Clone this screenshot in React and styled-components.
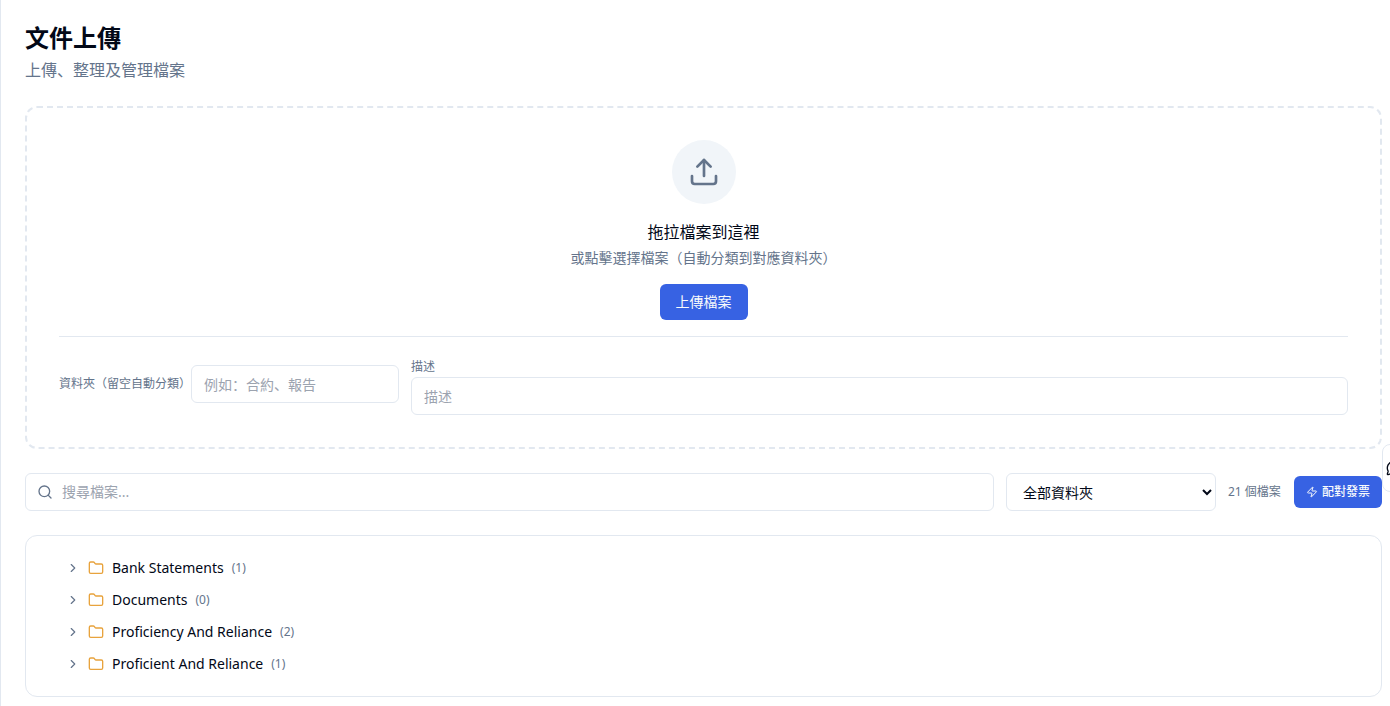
import React, { useState } from "react";
import styled, { createGlobalStyle } from "styled-components";
import {
  ChevronRight,
  Folder,
  MessageCircle,
  Search,
  Upload,
  Zap,
} from "lucide-react";

const folders = [
  { name: "Bank Statements", count: 1 },
  { name: "Documents", count: 0 },
  { name: "Proficiency And Reliance", count: 2 },
  { name: "Proficient And Reliance", count: 1 },
];

const App = () => {
  const [query, setQuery] = useState("");

  return (
    <>
      <GlobalStyle />
      <Page>
        <header>
          <Title>文件上傳</Title>
          <Subtitle>上傳、整理及管理檔案</Subtitle>
        </header>

        <DropZone>
          <UploadCircle>
            <Upload size={32} />
          </UploadCircle>
          <DropTitle>拖拉檔案到這裡</DropTitle>
          <DropHint>或點擊選擇檔案（自動分類到對應資料夾）</DropHint>
          <Button type="button">上傳檔案</Button>
          <Fields>
            <FolderField>
              <Label htmlFor="folder">資料夾（留空自動分類）</Label>
              <FolderInput id="folder" placeholder="例如：合約、報告" />
            </FolderField>
            <DescriptionField>
              <Label htmlFor="description">描述</Label>
              <Input id="description" placeholder="描述" />
            </DescriptionField>
          </Fields>
        </DropZone>

        <Toolbar>
          <SearchBox>
            <Search size={16} />
            <SearchInput
              type="text"
              aria-label="搜尋檔案"
              placeholder="搜尋檔案..."
              value={query}
              onChange={(event) => setQuery(event.target.value)}
            />
          </SearchBox>
          <Select aria-label="資料夾">
            <option>全部資料夾</option>
            {folders.map((folder) => (
              <option key={folder.name}>{folder.name}</option>
            ))}
          </Select>
          <FileCount>21 個檔案</FileCount>
          <Button type="button" $small>
            <Zap size={12} />
            配對發票
          </Button>
        </Toolbar>

        <FolderCard>
          {folders.map((folder) => (
            <FolderRow type="button" key={folder.name}>
              <Chevron size={14} />
              <FolderIcon size={16} />
              {folder.name}
              <FolderCount>({folder.count})</FolderCount>
            </FolderRow>
          ))}
        </FolderCard>
      </Page>
      <ChatTab type="button" aria-label="聊天">
        <MessageCircle size={16} />
      </ChatTab>
    </>
  );
};

export default App;

const GlobalStyle = createGlobalStyle`
  *,
  *::before,
  *::after {
    box-sizing: border-box;
  }

  body {
    margin: 0;
    overflow: hidden;
    background-color: #ffffff;
    color: #020817;
    font-family: "Noto Sans", "Noto Sans CJK SC", sans-serif;
    font-size: 14px;
    line-height: 20px;
  }

  button,
  input,
  select {
    color: inherit;
    font: inherit;
  }
`;

const Page = styled.main`
  display: flex;
  flex-direction: column;
  gap: 24px;
  min-height: 100vh;
  padding: 24px 8px 8px 24px;
  border-left: 1px solid #e2e8f0;
`;

const Title = styled.h1`
  margin: 0 0 6px;
  font-size: 24px;
  font-weight: 700;
  line-height: 28px;
`;

const Subtitle = styled.p`
  margin: 0;
  color: #64748b;
  font-size: 16px;
  line-height: 24px;
`;

const DropZone = styled.section`
  display: flex;
  flex-direction: column;
  align-items: center;
  padding: 32px;
  border: 2px dashed #e2e8f0;
  border-radius: 12px;
`;

const UploadCircle = styled.div`
  display: flex;
  align-items: center;
  justify-content: center;
  width: 64px;
  height: 64px;
  margin-bottom: 16px;
  border-radius: 50%;
  background-color: #f1f5f9;
  color: #64748b;
`;

const DropTitle = styled.h2`
  margin: 0 0 4px;
  font-size: 16px;
  font-weight: 400;
  line-height: 24px;
`;

const DropHint = styled.p`
  margin: 0 0 16px;
  color: #64748b;
`;

const Button = styled.button`
  display: inline-flex;
  align-items: center;
  justify-content: center;
  flex-shrink: 0;
  gap: 4px;
  height: ${({ $small }) => ($small ? "32px" : "36px")};
  padding: ${({ $small }) => ($small ? "0 12px" : "0 16px")};
  border: none;
  border-radius: 6px;
  background-color: #3762e3;
  color: #f8fafc;
  font-size: ${({ $small }) => ($small ? "12px" : "14px")};
  font-weight: ${({ $small }) => ($small ? 500 : 400)};
  cursor: pointer;
`;

const Fields = styled.div`
  display: flex;
  align-items: center;
  align-self: stretch;
  gap: 12px;
  margin-top: 16px;
  padding-top: 16px;
  border-top: 1px solid #e2e8f0;
`;

const FolderField = styled.div`
  display: flex;
  align-items: center;
`;

const DescriptionField = styled.div`
  display: flex;
  flex: 1;
  flex-direction: column;
  padding-top: 4px;
`;

const Label = styled.label`
  color: #64748b;
  font-size: 12px;
  white-space: nowrap;
`;

const Input = styled.input`
  width: 100%;
  height: 38px;
  padding: 0 12px;
  border: 1px solid #e2e8f0;
  border-radius: 6px;
  background-color: #ffffff;

  &::placeholder {
    color: #9ca3af;
    opacity: 1;
  }
`;

const FolderInput = styled(Input)`
  width: 208px;
`;

const Toolbar = styled.div`
  display: flex;
  align-items: center;
  gap: 12px;
`;

const SearchBox = styled.div`
  display: flex;
  align-items: center;
  flex: 1;
  gap: 9px;
  height: 38px;
  padding: 0 11px;
  border: 1px solid #e2e8f0;
  border-radius: 6px;
  color: #64748b;
`;

const SearchInput = styled.input`
  flex: 1;
  padding: 0;
  border: none;
  outline: none;
  background-color: transparent;
  color: #020817;

  &::placeholder {
    color: #9ca3af;
    opacity: 1;
  }
`;

const Select = styled.select`
  width: 210px;
  height: 38px;
  padding: 0 12px;
  border: 1px solid #e2e8f0;
  border-radius: 6px;
  background-color: #ffffff;
`;

const FileCount = styled.span`
  min-width: 54px;
  color: #64748b;
  font-size: 12px;
  white-space: nowrap;
`;

const FolderCard = styled.section`
  display: flex;
  flex-direction: column;
  padding: 16px 40px;
  border: 1px solid #e2e8f0;
  border-radius: 12px;
`;

const FolderRow = styled.button`
  display: flex;
  align-items: center;
  gap: 8px;
  height: 32px;
  padding: 0;
  border: none;
  background-color: transparent;
  text-align: left;
  cursor: pointer;
`;

const Chevron = styled(ChevronRight)`
  color: #64748b;
`;

const FolderIcon = styled(Folder)`
  color: #e8a33d;
`;

const FolderCount = styled.span`
  color: #64748b;
  font-size: 12px;
`;

const ChatTab = styled.button`
  position: fixed;
  top: 444px;
  right: -40px;
  display: flex;
  align-items: center;
  width: 48px;
  height: 48px;
  padding: 0 3px;
  border: 1px solid #e2e8f0;
  border-radius: 8px;
  background-color: #ffffff;
  cursor: pointer;
`;
